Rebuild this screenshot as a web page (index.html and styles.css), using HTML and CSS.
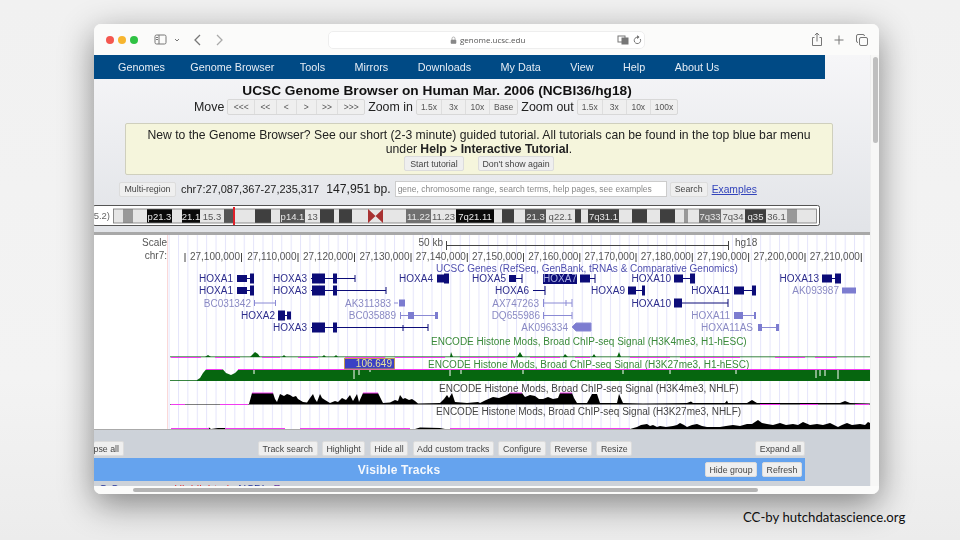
FILE: index.html
```html
<!DOCTYPE html>
<html>

<head>
  <meta charset="UTF-8">
  <title>UCSC Genome Browser</title>
  <link rel="stylesheet" href="styles.css">
</head>

<body>
  <div class="window">
    <div class="toolbar">
      <span class="light red"></span>
      <span class="light yellow"></span>
      <span class="light green"></span>
      <svg class="tool sidebar" width="32" height="14" viewBox="0 0 32 14">
        <rect x="1" y="2" width="11" height="9" rx="1.5" />
        <path d="M5 2v9M2 4.5h2M2 6.5h2" />
        <path d="M21 6l2 2 2-2" />
      </svg>
      <svg class="tool back" width="10" height="14" viewBox="0 0 10 14"><path d="M7 2L2 7l5 5" /></svg>
      <svg class="tool forward" width="10" height="14" viewBox="0 0 10 14"><path d="M3 2l5 5-5 5" /></svg>
      <div class="urlbar">
        <svg class="lock" width="7" height="8" viewBox="0 0 7 8">
          <path d="M2 4V2.5a1.5 1.5 0 0 1 3 0V4" />
          <rect x="1" y="4" width="5" height="3.5" rx=".5" />
        </svg>
        <span class="url">genome.ucsc.edu</span>
        <svg class="tool translate" width="26" height="10" viewBox="0 0 26 10">
          <rect x="1" y="1" width="7" height="6" />
          <rect class="solid" x="5" y="3" width="6" height="6" />
          <path d="M20.5 2.2a3.2 3.2 0 1 0 2.8 1.8M20.5 .8v2.6l1.6-1.3z" />
        </svg>
      </div>
      <svg class="tool share" width="12" height="15" viewBox="0 0 12 15">
        <path d="M3.5 5.5H1.5v8h9v-8H8.5M6 9.5V1M3.8 3.2L6 1l2.2 2.2" />
      </svg>
      <svg class="tool plus" width="10" height="10" viewBox="0 0 10 10"><path d="M5 .5v9M.5 5h9" /></svg>
      <svg class="tool tabs" width="12" height="12" viewBox="0 0 12 12">
        <rect x="3.5" y="3.5" width="8" height="8" rx="1.5" />
        <path d="M2 8.5A1.5 1.5 0 0 1 .5 7V2A1.5 1.5 0 0 1 2 .5h5A1.5 1.5 0 0 1 8.5 2" />
      </svg>
    </div>

    <div class="viewport">
      <div class="page">
        <nav class="topnav">
          <a class="tight">Genomes</a>
          <a class="tight">Genome Browser</a>
          <a>Tools</a>
          <a>Mirrors</a>
          <a>Downloads</a>
          <a>My Data</a>
          <a>View</a>
          <a>Help</a>
          <a>About Us</a>
        </nav>

        <h1 class="title">UCSC Genome Browser on Human Mar. 2006 (NCBI36/hg18)</h1>

        <div class="controls">
          <span>Move</span>
          <div class="group moves">
            <button>&lt;&lt;&lt;</button><button>&lt;&lt;</button><button>&lt;</button><button>&gt;</button><button>&gt;&gt;</button><button>&gt;&gt;&gt;</button>
          </div>
          <span>Zoom in</span>
          <div class="group">
            <button>1.5x</button><button>3x</button><button>10x</button><button>Base</button>
          </div>
          <span>Zoom out</span>
          <div class="group">
            <button>1.5x</button><button>3x</button><button>10x</button><button>100x</button>
          </div>
        </div>

        <div class="tutorial">
          <p>New to the Genome Browser? See our short (2-3 minute) guided tutorial. All tutorials can be found in the top blue bar menu</p>
          <p>under <b>Help &gt; Interactive Tutorial</b>.</p>
          <div class="tutorial__btns">
            <button class="btn">Start tutorial</button>
            <button class="btn">Don't show again</button>
          </div>
        </div>

        <div class="position">
          <button class="btn multi">Multi-region</button>
          <span class="coords">chr7:27,087,367-27,235,317</span>
          <span class="size">147,951 bp.</span>
          <input class="search" placeholder="gene, chromosome range, search terms, help pages, see examples">
          <button class="btn go">Search</button>
          <a class="examples">Examples</a>
        </div>

        <svg class="ideogram" width="726" height="21" viewBox="94 205 726 21">
          <rect class="ideo-frame" x="93" y="205.5" width="726.5" height="20" rx="2" />
          <text class="ideo-label" x="110" y="219" text-anchor="end">5.2)</text>
          <rect class="l" x="113" y="209" width="703" height="14" />
          <rect class="g" x="123" y="209" width="10" height="14" />
          <rect class="k" x="147" y="209" width="25" height="14" />
          <rect class="k" x="182" y="209" width="18" height="14" />
          <rect class="d2" x="224" y="209" width="10" height="14" />
          <rect class="d" x="255" y="209" width="16" height="14" />
          <rect class="d2" x="280" y="209" width="25" height="14" />
          <rect class="d" x="320" y="209" width="14" height="14" />
          <rect class="d" x="339" y="209" width="13" height="14" />
          <rect class="d3" x="406" y="209" width="25" height="14" />
          <rect class="k" x="456" y="209" width="38" height="14" />
          <rect class="d" x="502" y="209" width="12" height="14" />
          <rect class="d2" x="525" y="209" width="21" height="14" />
          <rect class="d" x="575" y="209" width="6" height="14" />
          <rect class="d" x="588" y="209" width="31" height="14" />
          <rect class="d" x="632" y="209" width="15" height="14" />
          <rect class="d" x="660" y="209" width="15" height="14" />
          <rect class="g" x="684" y="209" width="4" height="14" />
          <rect class="d3" x="699" y="209" width="22" height="14" />
          <rect class="d" x="745" y="209" width="21" height="14" />
          <rect class="g" x="787" y="209" width="10" height="14" />
          <rect class="ideo-box" x="113.5" y="209" width="703" height="14" />
          <path class="centromere" d="M368 209l7.5 7-7.500 7zM383 209l-7.500 7 7.500 7z" />
          <rect class="ideo-pos" x="233" y="207" width="2" height="18" />
          <g class="band-w">
            <text x="159.5" y="219.5">p21.3</text>
            <text x="191" y="219.5">21.1</text>
            <text x="292.5" y="219.5">p14.1</text>
            <text x="418.5" y="219.5">11.22</text>
            <text x="475" y="219.5">7q21.11</text>
            <text x="535.5" y="219.5">21.3</text>
            <text x="603.5" y="219.5">7q31.1</text>
            <text x="710" y="219.5">7q33</text>
            <text x="755.5" y="219.5">q35</text>
          </g>
          <g class="band-b">
            <text x="212" y="219.5">15.3</text>
            <text x="312.5" y="219.5">13</text>
            <text x="443.5" y="219.5">11.23</text>
            <text x="560.5" y="219.5">q22.1</text>
            <text x="733" y="219.5">7q34</text>
            <text x="776.5" y="219.5">36.1</text>
          </g>
        </svg>

        <svg class="tracks" width="776" height="194" viewBox="94 235 776 194">
          <defs>
            <pattern id="grid" x="178" y="0" width="9.39" height="10" patternUnits="userSpaceOnUse">
              <rect width="1" height="10" fill="#e4e4fa" />
            </pattern>
          </defs>
          <rect x="168" y="235" width="702" height="194" fill="url(#grid)" />
          <rect x="167" y="235" width="1" height="194" fill="#fbd8d8" />

          <!-- scale and position -->
          <g class="ruler">
            <text x="167" y="246" text-anchor="end">Scale</text>
            <text x="167" y="258.5" text-anchor="end">chr7:</text>
            <text x="443" y="246" text-anchor="end">50 kb</text>
            <text x="735" y="246">hg18</text>
            <path d="M446.5 241v9M446.5 245.5H728M728.5 241v9" />
            <path d="M185 253v9M241.5 253v9M298 253v9M354.5 253v9M411 253v9M467.3 253v9M523.5 253v9M579.8 253v9M636 253v9M692.3 253v9M748.6 253v9M805 253v9M861.3 253v9" />
            <g text-anchor="end">
              <text x="240" y="259.5">27,100,000</text>
              <text x="296.5" y="259.5">27,110,000</text>
              <text x="353" y="259.5">27,120,000</text>
              <text x="409.5" y="259.5">27,130,000</text>
              <text x="465.8" y="259.5">27,140,000</text>
              <text x="522" y="259.5">27,150,000</text>
              <text x="578.3" y="259.5">27,160,000</text>
              <text x="634.5" y="259.5">27,170,000</text>
              <text x="690.8" y="259.5">27,180,000</text>
              <text x="747.1" y="259.5">27,190,000</text>
              <text x="803.5" y="259.5">27,200,000</text>
              <text x="859.8" y="259.5">27,210,000</text>
            </g>
          </g>

          <text class="track-title" x="587" y="271.5" text-anchor="middle">UCSC Genes (RefSeq, GenBank, tRNAs &amp; Comparative Genomics)</text>

          <!-- genes, dark -->
          <g class="gene" text-anchor="end">
            <text x="233" y="282">HOXA1</text>
            <text x="233" y="294">HOXA1</text>
            <text x="307" y="282">HOXA3</text>
            <text x="307" y="294">HOXA3</text>
            <text x="275" y="319">HOXA2</text>
            <text x="307" y="331">HOXA3</text>
            <text x="433" y="282">HOXA4</text>
            <text x="506" y="282">HOXA5</text>
            <text x="529" y="294">HOXA6</text>
            <text x="625" y="294">HOXA9</text>
            <text x="671" y="282">HOXA10</text>
            <text x="671" y="306.5">HOXA10</text>
            <text x="730" y="294">HOXA11</text>
            <text x="819" y="282">HOXA13</text>
            <path d="M237 278.5h13M237 290.5h13M311 278.5h44M311 290.5h75M311 327.5h117M278 315.5h13M437 278.5h12M509 278.5h13M580 278.5h15M533 290.5h12M628 290.5h17M674 278.5h21M734 290.5h22M674 303h54M822 278.5h19" />
            <path d="M355 275v7M386 287v7M428 324v7M403 325v6M545 286v9M728 299v8M522 274v9M595 274v9" />
            <rect x="237" y="275" width="10" height="7" />
            <rect x="250" y="273.5" width="4" height="10" />
            <rect x="237" y="287" width="10" height="7" />
            <rect x="250" y="285.5" width="4" height="10" />
            <rect x="312" y="273.5" width="13" height="10" />
            <rect x="333" y="273.5" width="4" height="10" />
            <rect x="312" y="285.5" width="13" height="10" />
            <rect x="333" y="285.5" width="4" height="10" />
            <rect x="312" y="322.5" width="13" height="10" />
            <rect x="333" y="322.5" width="4" height="10" />
            <rect x="278" y="310.5" width="7" height="10" />
            <rect x="287" y="311.5" width="4" height="8" />
            <rect x="437" y="274.5" width="7" height="8" />
            <rect x="444" y="273.5" width="5" height="10" />
            <rect x="509" y="275" width="7" height="7" />
            <rect x="580" y="274.5" width="10" height="8" />
            <rect x="628" y="286.5" width="8" height="8" />
            <rect x="642" y="285.5" width="3" height="10" />
            <rect x="674" y="274.5" width="9" height="8" />
            <rect x="690" y="273.5" width="5" height="10" />
            <rect x="674" y="298.5" width="8" height="9" />
            <rect x="734" y="286.5" width="10" height="8" />
            <rect x="752" y="285.5" width="4" height="10" />
            <rect x="822" y="274.5" width="10" height="8" />
            <rect x="835" y="273.5" width="6" height="10" />
          </g>
          <rect x="543" y="274" width="34" height="10" fill="#0c0c78" />
          <text class="gene-sel" x="560" y="282" text-anchor="middle">HOXA7</text>

          <!-- genes, light -->
          <g class="gene-lt" text-anchor="end">
            <text x="251" y="306.5">BC031342</text>
            <text x="391" y="306.5">AK311383</text>
            <text x="396" y="319">BC035889</text>
            <text x="539" y="306.5">AX747263</text>
            <text x="540" y="319">DQ655986</text>
            <text x="568" y="331">AK096334</text>
            <text x="839" y="294">AK093987</text>
            <text x="730" y="319">HOXA11</text>
            <text x="753" y="331">HOXA11AS</text>
            <path d="M254 303h22M254.5 300v6M275.5 300v6M394 303h4M400 315.5h37M400.5 312v7M543 303h29M543.5 299v8M572 299v8M566 300v6M543 315.5h29M543.5 312v7M572 312v7M734 315.5h22M758 327.5h21" />
            <rect x="399" y="299.5" width="6" height="7" />
            <rect x="408" y="312" width="6" height="7" />
            <rect x="435" y="312" width="3" height="7" />
            <path d="M572 327l4-4h15v8h-15z" />
            <rect x="842" y="287.5" width="14" height="6" />
            <rect x="734" y="312" width="9" height="7" />
            <rect x="754" y="312" width="2" height="7" />
            <rect x="758" y="324" width="4" height="7" />
            <rect x="776" y="324" width="3" height="7" />
          </g>

          <!-- signal tracks -->
          <text class="enc-g" x="431" y="344.5">ENCODE Histone Mods, Broad ChIP-seq Signal (H3K4me3, H1-hESC)</text>
          <path class="sig-g" d="M170 357L205 357 208 355 211 357 250 357 253 354 255 352 258 354 260 357 282 357 284 355 286 357 322 357 324 355 326 357 334 357 336 355 338 357 450 357 451 352 453 357 517 357 520 352 523 357 563 357 565 354 568 357 592 357 594 354 596 357 617 357 619 352 621 357 860 357 870 357z" />
          <path class="base-g" d="M170 356.8H870" />
          <path class="magenta" d="M171 357.5h30M215 357.5h25M262 357.5h18M298 357.5h20M345 357.5h40M395 357.5h50M460 357.5h55M530 357.5h30M575 357.5h15M630 357.5h40M680 357.5h60M775 357.5h30M815 357.5h22" />

          <text class="enc-g" x="428" y="367.5">ENCODE Histone Mods, Broad ChIP-seq Signal (H3K27me3, H1-hESC)</text>
          <path class="sig-g" d="M197 381L197 380 200 378 203 373 206 369.5 223 369.5 226 373 231 375 235 373 238 370 870 369.5 870 381z" />
          <path class="base-g" d="M170 380.5H197" />
          <path class="magenta" d="M206 369.5H222M238 369.5H870" />
          <path class="notch" d="M254 370v4M354 370v9M359 370v5M370 370v2M450 370v6M461 370v4M523 370v4M623 370v4M670 370v4M736 370v4M816 370v8M820 370v6M825 370v6M838 370v9" />

          <rect class="hover" x="344.5" y="358.5" width="50" height="10.5" />
          <text class="hover-val" x="392" y="367">106.649</text>

          <text class="enc-k" x="439" y="391.5">ENCODE Histone Mods, Broad ChIP-seq Signal (H3K4me3, NHLF)</text>
          <path class="sig-k" d="M170 404L249 404 252 393 273 393 275 399 277 402 280 394 284 396 287 394 290 395 293 397 296 396 298 399 303 402 307 402.5 310 398 313 394 315 399 317 402 320 394 322 398 325 400 330 403 335 401 338 402 342 398 346 400 350 395 353 401 357 394 359 402 363 393 378 393 383 403 390 402.5 395 400 398 401 400 395 403 399 405 398 409 400 412 399 415 401 418 403.5 440 403 444 399 447 395 449 398 452 393 455 402 467 403 478 402 480 403 486 400 493 397 499 398 507 395 510 393 522 393 525 397 530 395 535 396 539 399 543 399 548 397 553 399 558 398 560 393 572 393 574 398 577 403 587 403 592 394 597 394 600 403 617 403 619 394 623 403 643 403.5 687 403 691 401.5 693 403 725 403 727 400.5 728 403 747 403 752 400 757 403 840 403 845 401 850 403 870 403.5 870 404.5 170 404.5z" />
          <path class="magenta" d="M171 404.5h14M220 404.5h28M252 393h21M363 393h15M510 393h12M560 393h12M760 404.5h20M800 404.5h18M855 404.5h14" />

          <text class="enc-k" x="436" y="414.5">ENCODE Histone Mods, Broad ChIP-seq Signal (H3K27me3, NHLF)</text>
          <path class="sig-k" d="M170 429L208 429 209 427.5 211 429 218 428 226 428 240 428 245 429 415 429 420 427.5 440 428 445 429 630 429 637 427 641 425 647 424 650 426 653 425 657 427 660 426 666 427 673 426 677 425 680 423 684 425 687 427 692 425 697 424 702 426 707 427 720 427 726 426 733 425 740 426 747 424 752 424 758 420 762 423 767 424 773 425 780 423 786 425 793 424 798 425 803 422 810 425 817 424 823 425 830 423 834 425 838 427 842 425 847 423 852 425 860 424 865 425 868 422 870 423 870 429z" />
          <path class="magenta" d="M171 428.5h38M225 428.5h60M300 428.5h110M450 428.5h180" />
        </svg>

        <div class="buttons">
          <button class="btn cut"><span>Collapse all</span></button>
          <button class="btn push">Track search</button>
          <button class="btn">Highlight</button>
          <button class="btn">Hide all</button>
          <button class="btn">Add custom tracks</button>
          <button class="btn">Configure</button>
          <button class="btn">Reverse</button>
          <button class="btn">Resize</button>
          <button class="btn end">Expand all</button>
        </div>

        <div class="visible">
          <span class="visible__title">Visible Tracks</span>
          <button class="btn">Hide group</button>
          <button class="btn">Refresh</button>
        </div>

        <div class="cutrow">
          <span class="blue">G G</span>
          <span class="hl">Highlighted</span>
          <span class="folder">NCBI</span>
          <span class="folder purple">Reseq</span>
        </div>
      </div>

      <div class="vscroll"><div class="vscroll__thumb"></div></div>
    </div>

    <div class="hscroll"><div class="hscroll__thumb"></div></div>
  </div>

  <div class="credit">CC-by hutchdatascience.org</div>
</body>

</html>
```

FILE: styles.css
```css
* {
  box-sizing: border-box;
  padding: 0;
  margin: 0;
}

body {
  height: 540px;
  overflow: hidden;
  padding: 24px 0 0 94px;
  font-family: "Liberation Sans", Arial, sans-serif;
  background: linear-gradient(#f1f1f1, #f3f3f3 70%, #ececec);
}

button {
  font-family: "Liberation Sans", Arial, sans-serif;
}

.window {
  width: 785px;
  height: 470px;
  display: flex;
  flex-direction: column;
  overflow: hidden;
  border-radius: 7px;
  background: #fbfbfa;
  box-shadow: 0 10px 34px rgba(0, 0, 0, 0.45);
  filter: blur(0.35px);
}

/* browser chrome */
.toolbar {
  height: 31px;
  flex: none;
  display: flex;
  align-items: center;
  padding-left: 12px;
  background: #fbfbfa;
}

.light {
  width: 8px;
  height: 8px;
  margin-right: 4px;
  border-radius: 50%;
}

.red { background: #f4574f; }
.yellow { background: #f7b52f; }
.green { background: #2fc244; }

.tool {
  fill: none;
  stroke: #777;
  stroke-width: 1;
}

.tool .solid { fill: #777; }

.sidebar { margin-left: 12px; }
.back { margin-left: 7px; stroke-width: 1.3; }
.forward { margin-left: 11px; stroke: #aaa; stroke-width: 1.3; }

.urlbar {
  width: 317px;
  height: 18px;
  margin-left: 104px;
  display: flex;
  align-items: center;
  padding-left: 121px;
  background: #fff;
  border: 1px solid #eeeeee;
  border-radius: 5px;
}

.lock {
  fill: #888;
  stroke: #888;
  stroke-width: 0.6;
  margin-right: 3px;
}

.lock path { fill: none; }

.url {
  font-family: "Open Sans", sans-serif;
  font-size: 8px;
  color: #555;
}

.translate { margin-left: 92px; }
.share { margin-left: 166px; }
.plus { margin-left: 11px; }
.tabs { margin-left: 12px; }

.viewport {
  height: 431px;
  flex: none;
  display: flex;
}

.page {
  width: 776px;
  flex: none;
  overflow: hidden;
  background: linear-gradient(#f6f6f8, #e2e4e8 40%, #cdd2d9 88%);
}

.vscroll {
  flex: 1;
  padding: 2px 2px 0;
  background: #f7f7f6;
  border-left: 1px solid #eee;
}

.vscroll__thumb {
  width: 5px;
  height: 86px;
  border-radius: 3px;
  background: #bfbfbf;
}

.hscroll {
  flex: 1;
  padding: 2px 0 0 39px;
  background: #fbfbfa;
}

.hscroll__thumb {
  width: 625px;
  height: 4px;
  border-radius: 2px;
  background: #b4b4b4;
}

/* page header */
.topnav {
  width: 731px;
  height: 24px;
  display: flex;
  align-items: center;
  padding-left: 24px;
  gap: 29.5px;
  background: #004a85;
}

.topnav a {
  font-size: 10.8px;
  color: #e4ecf4;
}

.topnav .tight {
  margin-right: -4px;
}

.title {
  width: 686px;
  margin-top: 4px;
  font-size: 13.7px;
  line-height: 15px;
  text-align: center;
  color: #111;
}

.controls {
  height: 17px;
  margin-left: 100px;
  display: flex;
  align-items: center;
  gap: 3px;
  font-size: 12.4px;
  color: #222;
}

.group {
  height: 16px;
  display: flex;
  background: #efefef;
  border: 1px solid #d8d8d8;
  border-radius: 2px;
}

.group button {
  min-width: 24px;
  padding: 0 4px;
  font-size: 8.5px;
  color: #555;
  background: none;
  border: 0;
  border-left: 1px solid #dedede;
}

.group button:first-child {
  border-left: 0;
}

.moves button {
  min-width: 20px;
  padding: 0 5.4px;
}

.tutorial {
  width: 708px;
  height: 52px;
  margin: 8px 0 0 31px;
  padding-top: 4px;
  background: #f5f5dc;
  border: 1px solid #cfcfbd;
  border-radius: 2px;
  font-size: 12.2px;
  line-height: 14px;
  text-align: center;
  color: #222;
}

.tutorial__btns {
  display: flex;
  justify-content: center;
  gap: 14px;
}

.tutorial__btns .btn {
  min-width: 60px;
}

.btn {
  height: 15px;
  padding: 0 3.5px;
  font-size: 8.8px;
  color: #444;
  background: #efefef;
  border: 1px solid #dcdcdc;
  border-radius: 2px;
  white-space: nowrap;
}

.position {
  height: 16px;
  margin: 6px 0 0 25px;
  display: flex;
  align-items: center;
}

.multi {
  width: 57px;
}

.go {
  width: 38px;
}

.coords {
  margin-left: 5px;
  font-size: 11px;
  color: #222;
}

.size {
  margin-left: 7px;
  font-size: 12.2px;
  color: #222;
}

.search {
  width: 272px;
  height: 16px;
  margin: 0 3px 0 4px;
  padding-left: 2px;
  font-family: "Liberation Sans", Arial, sans-serif;
  font-size: 8.5px;
  background: #fff;
  border: 1px solid #ccc;
}

.search::placeholder {
  color: #888;
}

.examples {
  margin-left: 4px;
  font-size: 10.3px;
  color: #3344bb;
  text-decoration: underline;
}

/* chromosome ideogram */
.ideogram {
  display: block;
  margin-top: 8px;
}

.ideo-frame { fill: #fff; stroke: #555; stroke-width: 1; }
.ideo-label { font-size: 9.5px; fill: #666; }
.ideo-box { fill: none; stroke: #777; stroke-width: 0.8; }
.ideo-pos { fill: #e0202a; }
.centromere { fill: #a83232; }
.l { fill: #e6e6e6; }
.g { fill: #999; }
.k { fill: #0a0a0a; }
.d { fill: #3f3f3f; }
.d2 { fill: #555; }
.d3 { fill: #707070; }

.band-w, .band-b {
  font-size: 9.5px;
  text-anchor: middle;
}

.band-w { fill: #e8e8e8; }
.band-b { fill: #555; }

/* browser image */
.tracks {
  display: block;
  margin-top: 6px;
  background: #fff;
  border-top: 3px solid #a8a8a8;
  border-bottom: 1px solid #aaa;
  height: 198px;
}

.ruler text {
  font-size: 10px;
  fill: #555;
}

.ruler path {
  fill: none;
  stroke: #444;
  stroke-width: 1;
}

.track-title {
  font-size: 10px;
  fill: #5050b0;
}

.gene text {
  font-size: 10px;
  fill: #2c2c8c;
  stroke: none;
}

.gene path {
  fill: none;
  stroke: #0c0c78;
  stroke-width: 1;
}

.gene rect {
  fill: #0c0c78;
}

.gene-sel {
  font-size: 10px;
  fill: #aab0e0;
}

.gene-lt text {
  font-size: 10px;
  fill: #8a8ac4;
  stroke: none;
}

.gene-lt path {
  fill: #7c7cd0;
  stroke: #8a8ad4;
  stroke-width: 1;
}

.gene-lt rect {
  fill: #7c7cd0;
}

.enc-g {
  font-size: 10px;
  fill: #3a8a3a;
}

.enc-k {
  font-size: 10px;
  fill: #444;
}

.sig-g { fill: #06660f; }
.sig-k { fill: #000; }
.base-g { stroke: #06660f; stroke-width: 0.8; }
.notch { stroke: #fff; stroke-width: 1; fill: none; }

.magenta {
  fill: none;
  stroke: #f23cf0;
  stroke-width: 1;
}

.hover {
  fill: #3b40c4;
  stroke: #c49a50;
  stroke-width: 1;
}

.hover-val {
  font-size: 10px;
  fill: #e6e29a;
  text-anchor: end;
}

/* buttons under the image */
.buttons {
  height: 15px;
  margin-top: 11px;
  display: flex;
  gap: 4.5px;
}

.cut {
  width: 30px;
  display: flex;
  align-items: center;
  justify-content: flex-end;
  padding: 0 4px 0 0;
  border-left: 0;
}

.cut span {
  flex: none;
}

.push { margin-left: 129.5px; }
.end { margin-left: 118.5px; }

.visible {
  width: 711px;
  height: 23px;
  margin-top: 2px;
  display: flex;
  align-items: center;
  gap: 5px;
  background: #65a3ee;
}

.visible__title {
  width: 606px;
  flex: none;
  padding-left: 4px;
  font-size: 12px;
  font-weight: 700;
  text-align: center;
  color: #f4f8fd;
  letter-spacing: 0.2px;
}

.cutrow {
  margin-top: 2px;
  padding-left: 5px;
  display: flex;
  font-size: 11px;
  line-height: 12px;
  color: #223399;
}

.hl {
  margin-left: 55px;
  color: #e83030;
}

.folder {
  margin-left: 9px;
  color: #223399;
}

.purple {
  color: #663399;
}

.credit {
  margin: 15px 0 0 649px;
  font-family: Lato, sans-serif;
  font-size: 13.2px;
  color: #111;
  white-space: nowrap;
}
```
